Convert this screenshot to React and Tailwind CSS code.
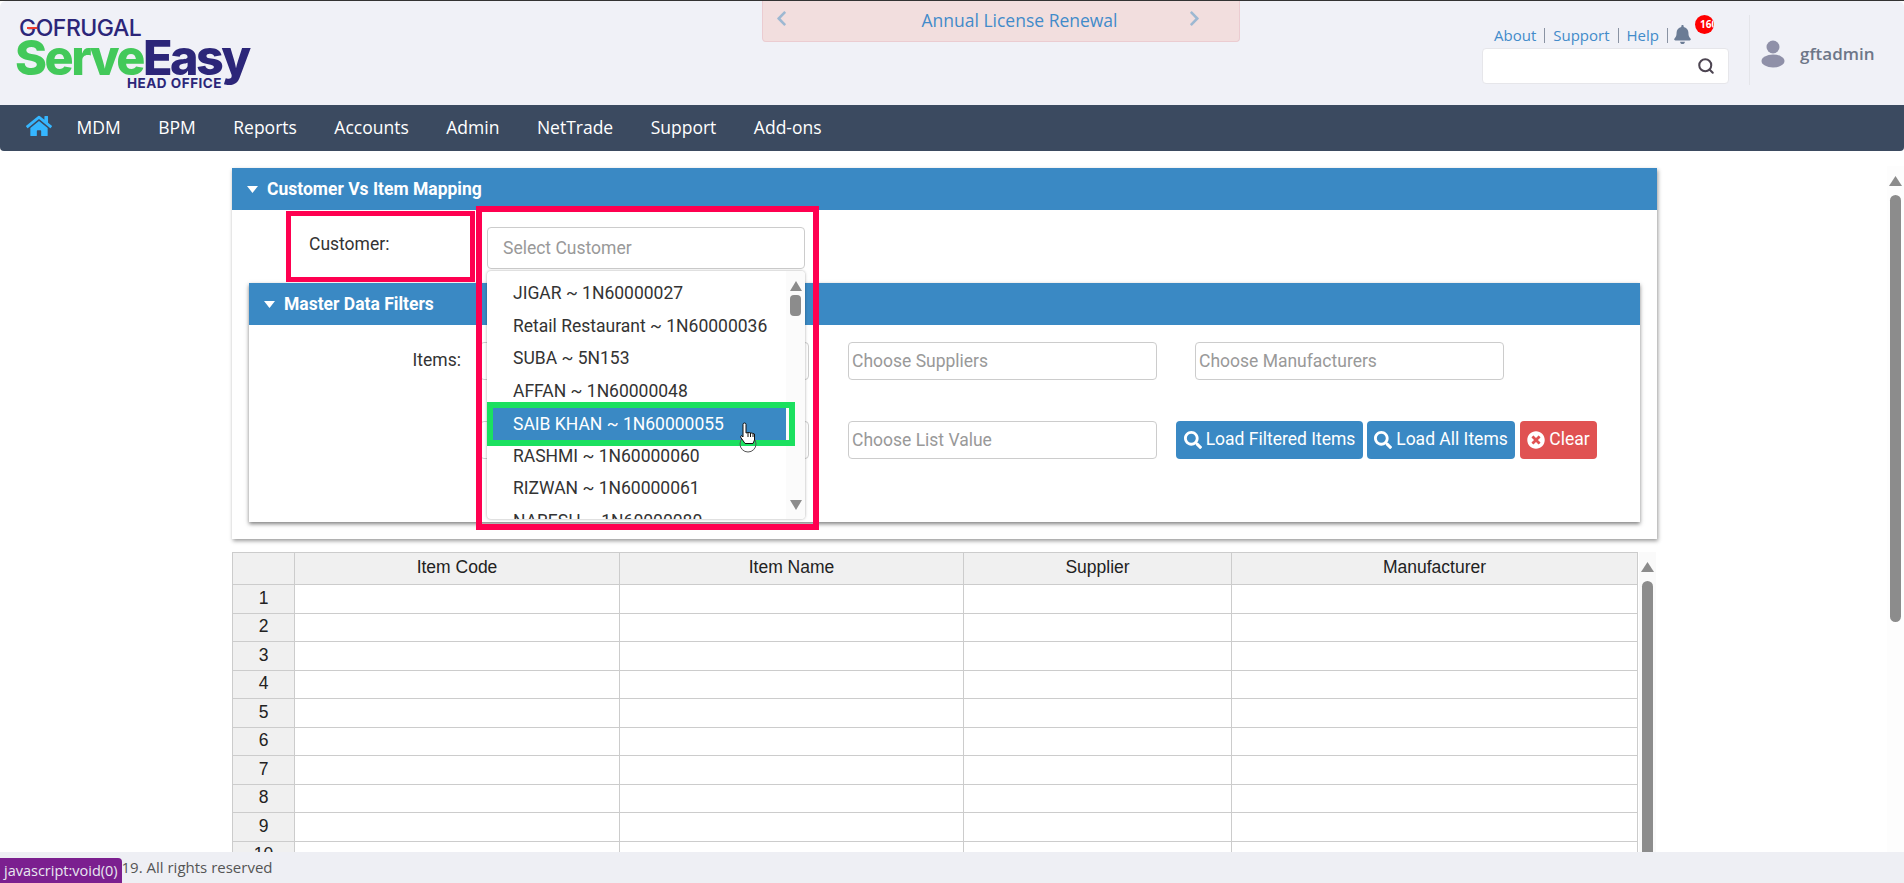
import { FaBell, FaChevronLeft, FaChevronRight, FaHome, FaSearch, FaTimesCircle } from 'react-icons/fa';
import { Search } from 'lucide-react';

const navItems = ['MDM', 'BPM', 'Reports', 'Accounts', 'Admin', 'NetTrade', 'Support', 'Add-ons'];
const customers = [
  'JIGAR ~ 1N60000027',
  'Retail Restaurant ~ 1N60000036',
  'SUBA ~ 5N153',
  'AFFAN ~ 1N60000048',
  'SAIB KHAN ~ 1N60000055',
  'RASHMI ~ 1N60000060',
  'RIZWAN ~ 1N60000061',
  'NARESH ~ 1N60000080',
];
const rows = [1, 2, 3, 4, 5, 6, 7, 8, 9, 10];

function Logo() {
  return (
    <div className="relative w-[762px] h-[104px] pl-[15px] pt-[13px] font-['Inter',sans-serif]">
      <div className="relative pl-[4px] text-[23px] leading-[28px] font-medium tracking-[-0.5px] text-[#2c2679]">
        GOFRUGAL
        <span className="absolute left-[12px] top-[13px] w-[10px] h-[2px] bg-[#ee3a2c]" />
      </div>
      <div className="flex -mt-[7px] text-[48.5px] leading-[46px] font-extrabold tracking-[-2.5px]">
        <span className="text-[#43c95a]">Serve</span>
        <span className="text-[#2c2679]">Easy</span>
      </div>
      <div className="absolute left-[127px] top-[74px] text-[13.5px] leading-[16px] font-bold tracking-[0.5px] text-[#2c2679]">HEAD OFFICE</div>
    </div>
  );
}

function Header() {
  return (
    <header className="flex h-[104px] bg-[#f0f1f7] rounded-t-md font-['Open_Sans',sans-serif]">
      <Logo />
      <div className="w-[478px] h-[41px] flex items-center justify-between pl-[10px] pr-[36px] bg-[#f2dede] border border-t-0 border-[#ebccd1] rounded-b">
        <FaChevronLeft className="text-[#9db8d2] text-[17px] -mt-[5px]" />
        <span className="text-[17.5px] text-[#428bca] ml-[63px] pb-[2px]">Annual License Renewal</span>
        <FaChevronRight className="text-[#9db8d2] text-[17px] -mt-[5px]" />
      </div>
      <div className="ml-[242px] w-[247px] pt-[14px]">
        <div className="relative flex items-center h-[33px] pt-[8px] pl-[12px] text-[15px] text-[#428bca]">
          <span>About</span>
          <span className="mx-[8px] h-[15px] w-px bg-[#8a93a3]" />
          <span>Support</span>
          <span className="mx-[8px] h-[15px] w-px bg-[#8a93a3]" />
          <span>Help</span>
          <span className="ml-[8px] mr-[5px] h-[15px] w-px bg-[#8a93a3]" />
          <FaBell className="text-[#6b7c95] text-[19px] -mt-[3px]" />
          <span className="absolute left-[213px] top-[0px] w-[19px] h-[19px] rounded-full bg-[#ff0000] overflow-hidden text-white text-[10px] font-bold leading-[19px] pl-[5px]">160</span>
        </div>
        <div className="h-[36px] bg-white border border-[#e6e6ea] rounded flex items-center justify-end pr-[13px]">
          <Search size={18} strokeWidth={2.75} className="text-[#4d4552]" />
        </div>
      </div>
      <div className="ml-[20px] mt-[14px] h-[70px] w-px bg-[#e4e5ea]" />
      <div className="ml-[11px] flex items-center gap-[15px] pt-[1px]">
        <svg width="24" height="28" viewBox="0 0 24 28">
          <circle cx="12" cy="7" r="6.5" fill="#8f90a8" />
          <ellipse cx="12" cy="21" rx="11.5" ry="6.5" fill="#8f90a8" />
        </svg>
        <span className="text-[17px] font-semibold text-[#6d7688]">gftadmin</span>
      </div>
    </header>
  );
}

function Nav() {
  return (
    <nav className="flex items-center h-[46px] pl-[26px] pb-[2px] gap-[37.5px] bg-[#3b4a60] rounded-b-sm text-[17.5px] text-white font-['Open_Sans',sans-serif]">
      <FaHome className="text-[#35b6ff] text-[26px] -mr-[13px] -mt-[2px]" />
      {navItems.map((n) => <span key={n}>{n}</span>)}
    </nav>
  );
}

function SectionHead({ title }) {
  return (
    <div className="flex items-center h-[42px] pl-[15px] gap-[9px] bg-[#3a89c4] text-white text-[17.5px] font-bold font-['Roboto',sans-serif]">
      <svg width="11" height="7" viewBox="0 0 11 7"><path d="M0 0h11L5.5 7z" fill="#fff" /></svg>
      <span>{title}</span>
    </div>
  );
}

function Field({ className, text }) {
  return (
    <div className={`flex items-center pl-[3px] pt-[1px] h-[38px] bg-white border border-[#cccccc] rounded text-[17.5px] text-[#999999] ${className}`}>
      {text}
    </div>
  );
}

function ActionButton({ className, icon, label }) {
  return (
    <div className={`flex items-center justify-center gap-[4px] h-[38px] pb-[1px] rounded text-white text-[17.5px] ${className}`}>
      {icon}
      <span>{label}</span>
    </div>
  );
}

function Panel() {
  return (
    <section className="w-[1425px] h-[371px] bg-white shadow-[1px_2px_4px_rgba(0,0,0,0.4)] font-['Roboto',sans-serif] text-[#333333]">
      <SectionHead title="Customer Vs Item Mapping" />
      <div className="flex h-[73px]">
        <div className="w-[255px] pl-[77px] pt-[22px] text-[17.5px] leading-[24px]">Customer:</div>
        <div className="mt-[17px] w-[318px] h-[42px] flex items-center pl-[15px] pt-[1px] border border-[#cccccc] rounded text-[17.5px] text-[#999999]">Select Customer</div>
      </div>
      <div className="mx-[17px] h-[239px] shadow-[0_2px_4px_rgba(0,0,0,0.5)]">
        <SectionHead title="Master Data Filters" />
        <div className="flex h-[96px] pt-[17px]">
          <div className="w-[212px] text-right text-[17.5px] leading-[36px]">Items:</div>
          <Field className="ml-[19px] w-[329px]" />
          <Field className="ml-[39px] w-[309px]" text="Choose Suppliers" />
          <Field className="ml-[38px] w-[309px]" text="Choose Manufacturers" />
        </div>
        <div className="flex">
          <Field className="ml-[231px] w-[329px]" />
          <Field className="ml-[39px] w-[309px]" text="Choose List Value" />
          <ActionButton className="ml-[19px] w-[187px] bg-[#3a89c4]" icon={<FaSearch className="text-[18px]" />} label="Load Filtered Items" />
          <ActionButton className="ml-[4px] w-[148px] bg-[#3a89c4]" icon={<FaSearch className="text-[18px]" />} label="Load All Items" />
          <ActionButton className="ml-[5px] w-[77px] bg-[#e05252]" icon={<FaTimesCircle className="text-[18px]" />} label="Clear" />
        </div>
      </div>
    </section>
  );
}

function Grid() {
  const cell = 'h-[28.5px] border-r border-b border-[#cccccc]';
  return (
    <div className="flex mt-[13px] w-[1424px] font-['Liberation_Sans',sans-serif] text-[#222222]">
      <div className="grid grid-cols-[62px_325px_344px_268px_406px] w-[1406px] self-start border-l border-t border-[#cccccc] text-[17.5px]">
        <div className="h-[32px] border-r border-b border-[#cccccc] bg-[#f0f0f0]" />
        {['Item Code', 'Item Name', 'Supplier', 'Manufacturer'].map((h) => (
          <div key={h} className="h-[32px] flex items-center justify-center pb-[2px] border-r border-b border-[#cccccc] bg-[#f0f0f0]">{h}</div>
        ))}
        {rows.map((r) => [
          <div key={`n${r}`} className={`${cell} bg-[#f0f0f0] flex items-center justify-center pb-[2px]`}>{r}</div>,
          <div key={`a${r}`} className={cell} />,
          <div key={`b${r}`} className={cell} />,
          <div key={`c${r}`} className={cell} />,
          <div key={`d${r}`} className={cell} />,
        ])}
      </div>
      <div className="w-[18px] ml-[1px] bg-[#fafafa] flex flex-col items-center pt-[10px]">
        <svg width="13" height="10" viewBox="0 0 13 10"><path d="M6.5 0L13 10H0z" fill="#8c8c8c" /></svg>
        <div className="w-[11px] h-[400px] mt-[9px] rounded-t-md bg-[#8c8c8c]" />
      </div>
    </div>
  );
}

function PageScrollbar() {
  return (
    <div className="absolute right-0 top-[15px] bottom-0 w-[17px] bg-[#fdfdfd] flex flex-col items-center pt-[10px]">
      <svg width="13" height="10" viewBox="0 0 13 10"><path d="M6.5 0L13 10H0z" fill="#8c8c8c" /></svg>
      <div className="w-[11px] h-[427px] mt-[9px] rounded-md bg-[#8c8c8c]" />
    </div>
  );
}

function CustomerDropdown() {
  return (
    <div className="absolute left-[487px] top-[271px] w-[318px] h-[248px] overflow-hidden bg-white rounded shadow-[0_0_3px_rgba(0,0,0,0.35)] font-['Roboto',sans-serif] text-[17.5px] text-[#333333]">
      <div className="pt-[6px]">
        {customers.map((c) => (
          <div key={c} className={`h-[32.5px] flex items-center pl-[26px] ${c.startsWith('SAIB') ? 'bg-[#3a89c4] text-white mr-[15px] pt-[2px]' : ''}`}>{c}</div>
        ))}
      </div>
      <div className="absolute right-0 top-0 bottom-0 w-[19px] bg-[#fbfbfb] flex flex-col items-center pt-[10px]">
        <svg width="12" height="10" viewBox="0 0 12 10"><path d="M6 0L12 10H0z" fill="#8c8c8c" /></svg>
        <div className="w-[11px] h-[21px] mt-[4px] rounded bg-[#8c8c8c]" />
        <svg className="mt-auto mb-[9px]" width="12" height="10" viewBox="0 0 12 10"><path d="M6 10L12 0H0z" fill="#8c8c8c" /></svg>
      </div>
    </div>
  );
}

function HandCursor() {
  return (
    <svg className="absolute left-[738px] top-[422px]" width="22" height="34" viewBox="0 0 22 34">
      <circle cx="10" cy="22" r="8" fill="none" stroke="#555" strokeWidth="1" />
      <path d="M5 2.5a1.5 1.5 0 0 1 3 0V11l2-.5 2.5.3 2 .5 2 .7V18l-1.5 3.5H7L2.5 15l1-1.5L5 15z" fill="#fff" stroke="#111" strokeWidth="1" />
      <path d="M10 11v4M12.5 11v4M15 11.5V15" stroke="#111" strokeWidth="1" />
    </svg>
  );
}

export default function App() {
  return (
    <div className="relative flex flex-col h-screen overflow-hidden bg-white">
      <div className="h-px bg-[#333333]" />
      <Header />
      <Nav />
      <main className="relative flex-1 overflow-hidden pl-[232px] pt-[17px]">
        <Panel />
        <Grid />
        <PageScrollbar />
      </main>
      <footer className="h-[31px] flex items-center pl-[88px] bg-[#eeeff4] text-[15px] text-[#555555] font-['Open_Sans',sans-serif]">
        © 2019. All rights reserved
      </footer>

      <CustomerDropdown />
      <div className="absolute left-[286px] top-[211px] w-[189px] h-[71px] border-[5px] border-[#ff0050]" />
      <div className="absolute left-[476px] top-[206px] w-[343px] h-[324px] border-[6px] border-[#ff0050]" />
      <div className="absolute left-[487px] top-[402px] w-[308px] h-[44px] border-[6px] border-[#1be05f]" />
      <HandCursor />
      <div className="absolute left-0 bottom-0 h-[25px] px-[4px] bg-[#7b1f8f] rounded-tr text-[14.5px] leading-[25px] text-[#e8e8f0] font-['Open_Sans',sans-serif]">javascript:void(0)</div>
    </div>
  );
}
